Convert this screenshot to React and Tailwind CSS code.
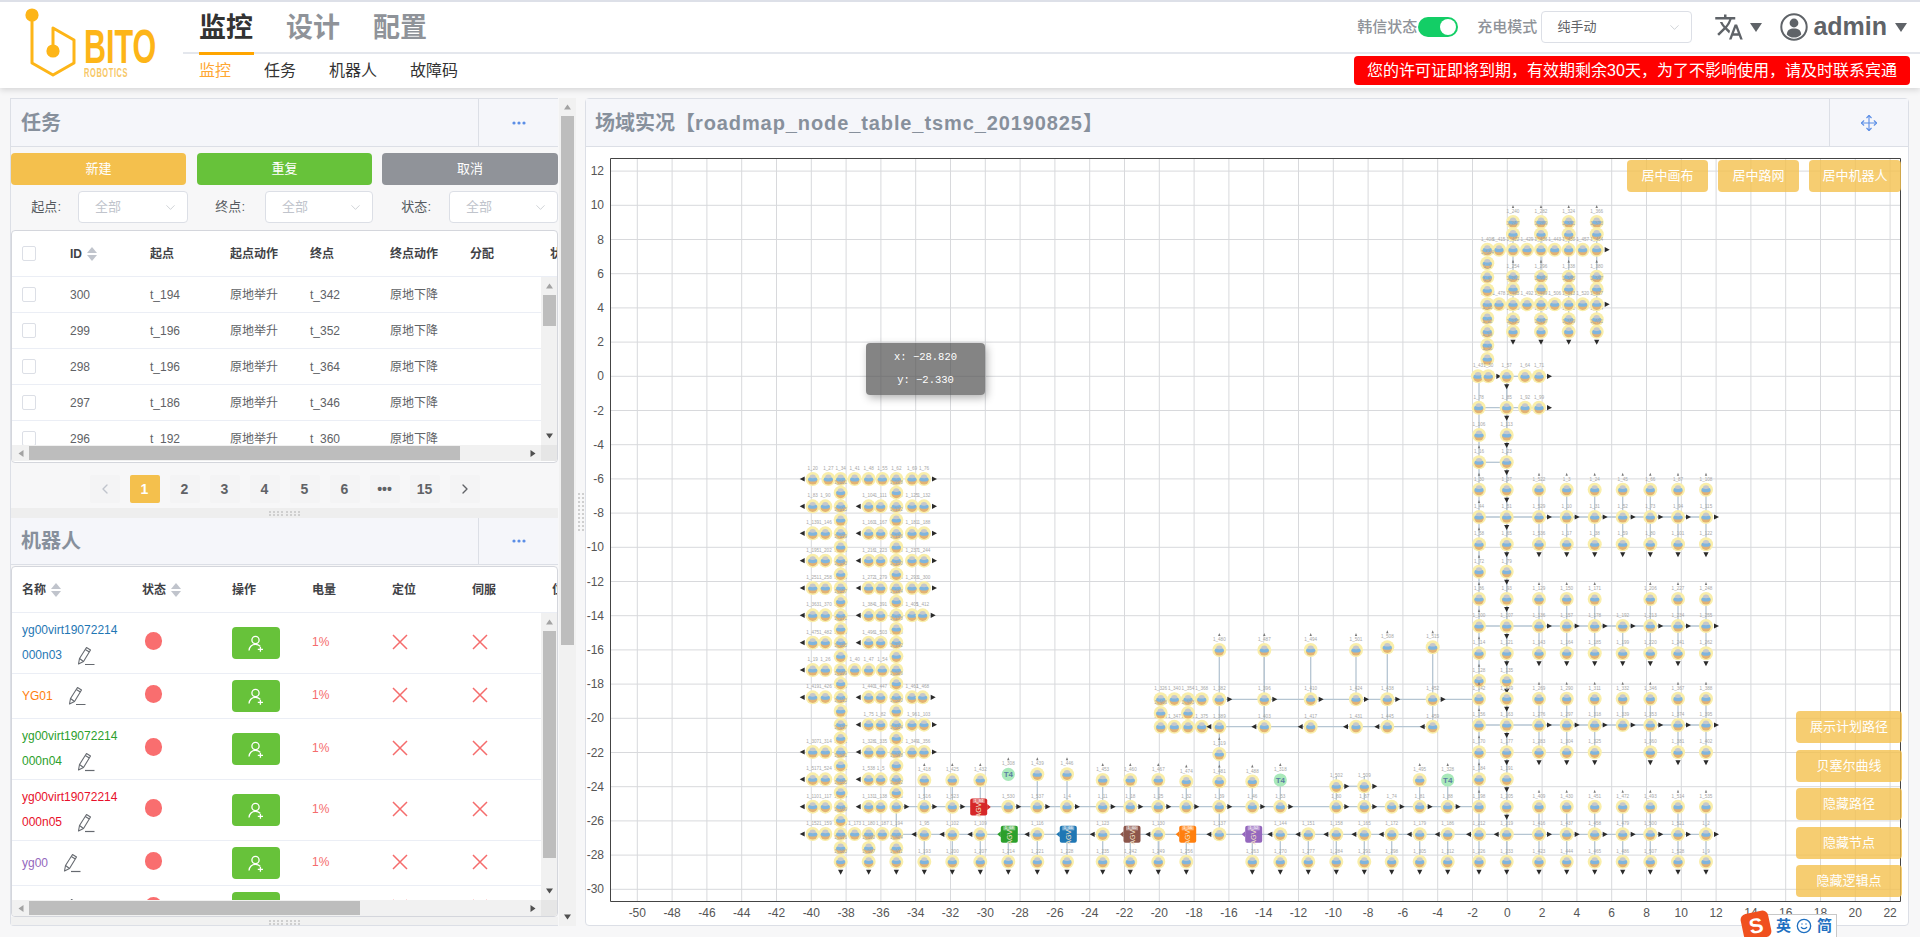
import React from "react";
import { ChevronDown, ChevronLeft, ChevronRight, Move, Smile } from "lucide-react";
import { MdTranslate } from "react-icons/md";

/* ---------- map data (page pixels; the svg's viewBox is aligned with the page) ---------- */
const nodes = [];
const add = (x, y, a) => nodes.push([x, y, a]);
const z9x = (z) => 790 + z / 3;
const z9y = (z) => 460 + z / 3;
const row9 = (yz, xs, l, r) =>
  xs.forEach((z, i) => add(z9x(z), z9y(yz), i === 0 && l ? "l" : i === xs.length - 1 && r ? "r" : ""));

row9(57, [68, 115, 152, 194, 236, 277, 319, 366, 402], true, true);
[139, 220, 302, 384, 876].forEach((y) => {
  row9(y, [68, 106, 152], true);
  row9(y, [236, 272, 319, 366, 402], true, true);
});
row9(466, [68, 106, 152], true);
row9(466, [236, 272, 319, 366, 398], true, true);
row9(712, [68, 106, 152], true);
row9(712, [236, 272, 319, 366, 398], true, true);
[548, 958].forEach((y) => {
  row9(y, [68, 106, 152], true);
  row9(y, [236, 272, 319], true);
});
row9(630, [68, 106, 152, 194, 236, 277, 319], true);
row9(794, [152]);
row9(794, [236, 272, 319, 366, 402], true, true);
row9(1040, [68, 106, 152], true);
row9(1040, [236, 272, 319], true, true);
row9(1122, [68, 106, 152, 194, 236, 277, 319], true);
[98, 180, 261, 343, 425, 507, 589, 671, 753, 835, 917, 998].forEach((y) => {
  row9(y, [152]);
  row9(y, [319]);
});
row9(1081, [152]);
[152, 236, 319].forEach((x) => {
  add(z9x(x), z9y(1164), "");
  add(z9x(x), z9y(1205), "d");
});

[[924.3, 780], [952.3, 780], [980.3, 780], [1037.3, 774.3], [1067, 774.3], [1102.7, 780], [1130.3, 780], [1158.3, 780], [1186.3, 781.5], [1219.3, 781.5], [1252.3, 781.5], [1419.7, 780]].forEach(([x, y]) => add(x, y, "u"));
[1336.3, 1364.3].forEach((x) => add(x, 786.3, "r"));
[924.3, 952.3, 1008.3, 1037.3, 1067, 1102.7, 1130.3, 1158.3, 1186.3, 1219.3, 1252.3, 1280.3, 1336.3, 1364.3, 1391.7, 1419.7, 1447.7].forEach((x) => add(x, 806.7, "r"));
[924.3, 952.3, 980.3, 1037.3, 1102.7, 1158.3, 1219.3, 1280.3, 1308.3, 1336.3, 1364.3, 1391.7, 1419.7, 1447.7].forEach((x) => add(x, 834.3, "l"));
[924.3, 952.3, 980.3, 1008.3, 1037.3, 1067, 1102.7, 1130.3, 1158.3, 1186.3, 1252.3, 1280.3, 1308.3, 1336.3, 1364.3, 1391.7, 1419.7, 1447.7].forEach((x) => add(x, 861.7, "d"));

add(1219.3, 754, "u");
[1160.7, 1174.3, 1188, 1201.7].forEach((x) => {
  add(x, 699.3, "");
  add(x, 726.7, "");
});
[1219.3, 1264.3, 1310.7, 1356, 1387.3, 1432.7].forEach((x) => {
  add(x, 699.3, "r");
  add(x, 726.7, "l");
});
add(1160.7, 713, "");
add(1188, 713, "");
[1219.3, 1264.3, 1310.7, 1356].forEach((x) => add(x, 650, "u"));
[1387.3, 1432.7].forEach((x) => add(x, 647.3, "u"));

const RC = [1539, 1566.7, 1594.7, 1622.7, 1650.3, 1678, 1706];
const GAP = 1622.7;
[
  [489.7, 517, 544.3, 0],
  [599, 626, 653.3, 1],
  [698.7, 725, 752.3, 2],
  [806.7, 834.3, 861.7, 0],
].forEach(([a, b, c, miss]) =>
  RC.forEach((x) => {
    if (!(miss === 1 && x === GAP)) add(x, a, "u");
    add(x, b, "r");
    if (!(miss === 2 && x === GAP)) add(x, c, "d");
  })
);
[462.3, 489.7, 517, 544.3, 571.7, 599, 626, 653.3, 680.7, 698.7, 725, 752.3, 779.3, 806.7].forEach((y) => {
  add(1479, y, "u");
  add(1506.7, y, "d");
});
add(1479, 834.3, "l");
add(1506.7, 834.3, "l");
add(1479, 861.7, "d");
add(1506.7, 861.7, "d");

[1513, 1541, 1568.7, 1596.7].forEach((x) => {
  add(x, 222, "u");
  add(x, 234.3, "");
  add(x, 276.7, "u");
  add(x, 289, "");
  add(x, 319.3, "");
  add(x, 331.7, "d");
});
[249.7, 304.3].forEach((y) =>
  [1487.3, 1499, 1513, 1527, 1541, 1554.7, 1568.7, 1582.7, 1596.7].forEach((x, i) => add(x, y, i === 8 ? "r" : ""))
);
[263.3, 277, 290.3, 318, 331.7, 345, 359].forEach((y) => add(1487.3, y, ""));
add(1478, 376.3, "");
add(1488.3, 376.3, "r");
add(1506.7, 376.3, "d");
add(1525, 376.3, "");
add(1539, 376.3, "r");
add(1478.7, 407.7, "");
add(1506.7, 407.7, "d");
add(1525, 407.7, "");
add(1539, 407.7, "r");
add(1479, 435, "");
add(1506.7, 435, "d");

const links = [
  [z9x(152), z9y(57), z9x(152), z9y(1205)],
  [z9x(319), z9y(57), z9x(319), z9y(1205)],
  [z9x(236), z9y(1122), z9x(236), z9y(1205)],
  [896.3, 806.7, 1479, 806.7],
  [896.3, 834.3, 1706, 834.3],
  [1219.3, 650, 1219.3, 834],
  [1219.3, 699.3, 1479, 699.3],
  [1219.3, 726.7, 1432.7, 726.7],
  [1264.3, 650, 1264.3, 726.7],
  [1310.7, 650, 1310.7, 699.3],
  [1356, 650, 1356, 699.3],
  [1387.3, 647, 1387.3, 726.7],
  [1432.7, 647, 1432.7, 726.7],
  [1336.3, 786.3, 1364.3, 786.3],
  [1479, 376.3, 1479, 861.7],
  [1506.7, 376.3, 1506.7, 861.7],
  [1479, 517, 1706, 517],
  [1479, 626, 1706, 626],
  [1479, 725, 1706, 725],
  [1479, 462.3, 1506.7, 462.3],
  [1478, 407.7, 1539, 407.7],
  [1506.7, 376.3, 1539, 376.3],
  ...RC.flatMap((x) => [
    [x, 489.7, x, 544.3],
    [x, x === GAP ? 626 : 599, x, 653.3],
    [x, 698.7, x, x === GAP ? 725 : 752.3],
    [x, 806.7, x, 861.7],
  ]),
  ...[924.3, 952.3, 980.3, 1037.3, 1067, 1102.7, 1130.3, 1158.3, 1186.3, 1252.3, 1280.3, 1336.3, 1364.3, 1419.7, 1447.7].map((x) => [x, 776, x, 806.7]),
  ...[924.3, 952.3, 980.3, 1008.3, 1037.3, 1067, 1102.7, 1130.3, 1158.3, 1186.3, 1252.3, 1280.3, 1308.3, 1336.3, 1364.3, 1391.7, 1419.7, 1447.7].map((x) => [x, 834.3, x, 861.7]),
];
[1513, 1541, 1568.7, 1596.7].forEach((x) => links.push([x, 222, x, 331.7]));

const agvs = [
  [978.7, 807, "#d62728", "r", "1_84"],
  [1009.3, 834.3, "#2ca02c", "l", "1_68"],
  [1068.3, 834.3, "#1f77b4", "l", "1_66"],
  [1132, 834.3, "#8c564b", "l", "1_60"],
  [1187.7, 834.3, "#ff7f0e", "l", "1_56"],
  [1253.7, 834.3, "#9467bd", "l", "1_52"],
];
const tNodes = [[1008.3, 774.3], [1280.3, 780], [1447.7, 780]];

const Node = ({ x, y, a, i }) => (
  <g transform={`translate(${x} ${y})`}>
    <use href="#mapnode" />
    <text y="-9" textAnchor="middle" fontSize="4.6" fill="#a6a6a6">{`1_${(i * 7 + 20) % 540}`}</text>
    {a === "r" && <path d="M8 -2.6L13 0L8 2.6Z" fill="#2a2a2a" />}
    {a === "l" && <path d="M-8 -2.6L-13 0L-8 2.6Z" fill="#2a2a2a" />}
    {a === "d" && <path d="M-2.6 8L2.6 8L0 13Z" fill="#2a2a2a" />}
    {a === "u" && <path d="M-1.2 -14L1.2 -14L0 -17Z" fill="#777" />}
  </g>
);

const MapChart = () => {
  const xs = [];
  for (let v = -50; v <= 22; v += 2) xs.push(v);
  const ys = [];
  for (let v = -30; v <= 12; v += 2) ys.push(v);
  const px = (v) => 1507.3 + v * 17.4;
  const py = (v) => 376.3 - v * 17.1;
  return (
    <svg viewBox="586 147 1322 778" width="1322" height="778" className="block">
      <defs>
        <g id="mapnode">
          <circle r="7" fill="#f9eeaa" />
          <path d="M-4.8 0.8A4.8 4.8 0 0 0 4.8 0.8Z" fill="#e3b273" />
          <ellipse cy="0.2" rx="4.6" ry="2.3" fill="#7fb5de" />
          <path d="M-3.2 -1.4A3.2 3 0 0 1 3.2 -1.4Q0 0 -3.2 -1.4Z" fill="#c6c8cc" />
        </g>
      </defs>
      {xs.map((v) => (
        <line key={v} x1={px(v)} x2={px(v)} y1="158" y2="901" stroke="#d8d9dc" />
      ))}
      {ys.map((v) => (
        <line key={v} x1="610" x2="1900" y1={py(v)} y2={py(v)} stroke="#d8d9dc" />
      ))}
      <path d="M610.5 158.5H1900.5V901.5H610.5Z" fill="none" stroke="#444" strokeWidth="1" />
      {xs.map((v) => (
        <text key={v} x={px(v)} y="917" textAnchor="middle" fontSize="12" fill="#555">{v}</text>
      ))}
      {ys.map((v) => (
        <text key={v} x="604" y={py(v) + 4} textAnchor="end" fontSize="12" fill="#555">{v}</text>
      ))}
      {links.map((l, i) => (
        <line key={i} x1={l[0]} y1={l[1]} x2={l[2]} y2={l[3]} stroke="#b5c5d2" strokeWidth="1.3" />
      ))}
      {nodes.map((n, i) => (
        <Node key={i} x={n[0]} y={n[1]} a={n[2]} i={i} />
      ))}
      {tNodes.map(([x, y], i) => (
        <g key={i} transform={`translate(${x} ${y})`}>
          <text y="-9" textAnchor="middle" fontSize="4.6" fill="#a6a6a6">1_3{i}8</text>
          <path d="M-1.2 -14L1.2 -14L0 -17Z" fill="#777" />
          <circle r="6.6" fill="#a9e9ba" />
          <text y="3" textAnchor="middle" fontSize="8" fontWeight="700" fill="#5d7fa3">T4</text>
        </g>
      ))}
      {agvs.map(([x, y, c, d, t], i) => (
        <g key={i} transform={`translate(${x} ${y})`}>
          <rect x="-8.5" y="-8.5" width="17" height="17" rx="2" fill={c} />
          {d === "r" ? <path d="M8.5 -3L12 0L8.5 3Z" fill={c} /> : <path d="M-8.5 -3L-12 0L-8.5 3Z" fill={c} />}
          <rect x="-6" y="-8" width="12" height="4" fill="#ffffff" opacity="0.4" />
          <text y="-5" textAnchor="middle" fontSize="4" fill="#fff">{t}</text>
          <text transform="rotate(-90) translate(-3 2.5)" textAnchor="middle" fontSize="7" fill="#f3e3c8">AGV</text>
        </g>
      ))}
    </svg>
  );
};

/* ---------- small drawings ---------- */
const Caret = ({ d, c = "#505050" }) => (
  <svg width="9" height="6" viewBox="0 0 9 6" className="block">
    {d === "u" && <path d="M1 5.5L8 5.5L4.5 .5Z" fill={c} />}
    {d === "d" && <path d="M1 .5L8 .5L4.5 5.5Z" fill={c} />}
  </svg>
);
const CaretH = ({ d, c = "#505050" }) => (
  <svg width="6" height="9" viewBox="0 0 6 9" className="block">
    {d === "l" ? <path d="M5.5 1L5.5 8L.5 4.5Z" fill={c} /> : <path d="M.5 1L.5 8L5.5 4.5Z" fill={c} />}
  </svg>
);
const Sort = () => (
  <svg width="10" height="14" viewBox="0 0 10 14" className="ml-[5px] shrink-0">
    <path d="M0 6L5 0L10 6Z" fill="#c0c4cc" />
    <path d="M0 8L5 14L10 8Z" fill="#c0c4cc" />
  </svg>
);
const Dots = () => (
  <svg width="14" height="4" viewBox="0 0 14 4">
    <circle cx="2" cy="2" r="1.6" fill="#5b8ee6" />
    <circle cx="7" cy="2" r="1.6" fill="#5b8ee6" />
    <circle cx="12" cy="2" r="1.6" fill="#5b8ee6" />
  </svg>
);
const EditIcon = () => (
  <svg width="18" height="20" viewBox="0 0 18 20" fill="none" stroke="#666a70" strokeWidth="1.1" className="shrink-0">
    <path d="M2.5 12.5L9.5 1.5L13.5 4L6.5 15.5L1.5 18Z" strokeLinejoin="round" />
    <path d="M8.3 3.5L12.3 6M2.5 12.5L6.5 15.5" />
    <path d="M8 18.5H17.5" strokeWidth="1.2" />
  </svg>
);
const UserPlusIcon = () => (
  <svg width="16" height="17" viewBox="0 0 16 17" fill="none" stroke="#fff" strokeWidth="1.3">
    <circle cx="7.5" cy="5" r="3.6" />
    <path d="M1 15.5C1.5 11.5 4 9.3 7.5 9.3C9.5 9.3 11 10 12.2 11.2" />
    <path d="M9.8 14.3H15M12.4 11.8V16.8" />
  </svg>
);
const Cross = () => (
  <svg width="16" height="16" viewBox="0 0 16 16" stroke="#f56c6c" strokeWidth="1.5">
    <path d="M1 1L15 15M15 1L1 15" />
  </svg>
);
const UserCircle = () => (
  <svg width="28" height="28" viewBox="0 0 28 28">
    <circle cx="14" cy="14" r="12.7" fill="none" stroke="#5f6368" strokeWidth="2" />
    <circle cx="14" cy="10" r="4.4" fill="#5f6368" />
    <path d="M6.8 21.5C7 17 10 15.5 14 15.5C18 15.5 21 17 21.2 21.5C19.5 23.6 17 24.6 14 24.6C11 24.6 8.5 23.6 6.8 21.5Z" fill="#5f6368" />
  </svg>
);
const TriDown = () => (
  <svg width="12" height="9" viewBox="0 0 12 9">
    <path d="M0 0H12L6 9Z" fill="#5f6368" />
  </svg>
);
const Logo = () => (
  <svg width="150" height="84" viewBox="20 2 150 84" className="block shrink-0">
    <g stroke="#fdb518" strokeWidth="3" fill="none" strokeLinejoin="round">
      <path d="M32 18V63L53 75L74 63V40L53 28V50" />
    </g>
    <circle cx="32" cy="15" r="6.6" fill="#fdb518" />
    <circle cx="53" cy="51" r="6.6" fill="#fdb518" />
    <text transform="translate(84 63) scale(0.636 1)" fontSize="48" fontWeight="700" fill="#fdb518">BITO</text>
    <text transform="translate(84 77) scale(0.62 1)" fontSize="12" fontWeight="700" fill="#f7c766" letterSpacing="1">ROBOTICS</text>
  </svg>
);

/* ---------- left panel parts ---------- */
const Select = ({ w }) => (
  <div className={`${w} h-[32px] bg-white border border-[#dcdfe6] rounded flex items-center justify-between pl-[16px] pr-[9px] text-[13px] text-[#c0c4cc]`}>
    <span>全部</span>
    <ChevronDown size={15} strokeWidth={1} color="#b4b8bf" />
  </div>
);
const Filter = ({ label, w, mr, cell }) => (
  <div className={`${cell} flex items-center justify-end`}>
    <span className={`${mr} text-[13px] text-[#555a60]`}>{label}:</span>
    <Select w={w} />
  </div>
);
const Check = () => <div className="w-[14px] h-[15px] bg-white border border-[#dcdfe6] rounded-[2px]" />;

const HScroll = ({ thumb }) => (
  <div className="h-[16px] shrink-0 bg-[#f1f1f1] flex items-center">
    <div className="w-[17px] flex justify-center"><CaretH d="l" c="#a3a3a3" /></div>
    <div className="flex-1 h-[14px]"><div className={`${thumb} h-full bg-[#bdbdbd]`} /></div>
    <div className="w-[17px] flex justify-center"><CaretH d="r" /></div>
    <div className="w-[16px] h-full bg-[#e6e6e6]" />
  </div>
);
const VScroll = ({ thumb }) => (
  <div className="w-[16px] shrink-0 bg-[#f1f1f1] flex flex-col items-center relative">
    <div className="h-[18px] flex items-center"><Caret d="u" c="#a3a3a3" /></div>
    <div className="flex-1 w-[13px]"><div className={`${thumb} bg-[#bdbdbd]`} /></div>
    <div className="h-[18px] flex items-center"><Caret d="d" /></div>
  </div>
);

const taskRows = [
  ["300", "t_194", "t_342"],
  ["299", "t_196", "t_352"],
  ["298", "t_196", "t_364"],
  ["297", "t_186", "t_346"],
  ["296", "t_192", "t_360"],
];
const TaskTable = () => (
  <div className="mt-[7px] h-[233px] bg-white border border-[#d4d6dc] rounded overflow-hidden flex flex-col text-[12px]">
    <div className="h-[46px] shrink-0 flex items-center border-b border-[#ebeef5] overflow-hidden whitespace-nowrap font-bold text-[#3f4246]">
      <div className="w-[58px] shrink-0 pl-[10px]"><Check /></div>
      <div className="w-[80px] shrink-0 flex items-center">ID<Sort /></div>
      <div className="w-[80px] shrink-0">起点</div>
      <div className="w-[80px] shrink-0">起点动作</div>
      <div className="w-[80px] shrink-0">终点</div>
      <div className="w-[80px] shrink-0">终点动作</div>
      <div className="w-[80px] shrink-0">分配</div>
      <div className="w-[80px] shrink-0">状态</div>
    </div>
    <div className="h-[168px] shrink-0 flex">
      <div className="flex-1 overflow-hidden text-[#606266]">
        {taskRows.map((r) => (
          <div key={r[0]} className="h-[36px] flex items-center border-b border-[#ebeef5] whitespace-nowrap">
            <div className="w-[58px] shrink-0 pl-[10px]"><Check /></div>
            <div className="w-[80px] shrink-0">{r[0]}</div>
            <div className="w-[80px] shrink-0">{r[1]}</div>
            <div className="w-[80px] shrink-0">原地举升</div>
            <div className="w-[80px] shrink-0">{r[2]}</div>
            <div className="w-[80px] shrink-0">原地下降</div>
          </div>
        ))}
      </div>
      <VScroll thumb="mt-0 h-[31px]" />
    </div>
    <HScroll thumb="w-[431px]" />
  </div>
);

const robots = [
  { n: ["yg00virt19072214", "000n03"], c: "text-[#1f77b4]", h: "h-[61px]" },
  { n: ["YG01"], c: "text-[#ff7f0e]", h: "h-[45px]" },
  { n: ["yg00virt19072214", "000n04"], c: "text-[#2ca02c]", h: "h-[61px]" },
  { n: ["yg00virt19072214", "000n05"], c: "text-[#e8102a]", h: "h-[61px]" },
  { n: ["yg00"], c: "text-[#9467bd]", h: "h-[45px]" },
  { n: [""], c: "text-[#8c564b]", h: "h-[45px]" },
];
const RobotTable = () => (
  <div className="h-[351px] mt-px bg-white border border-[#d4d6dc] rounded overflow-hidden flex flex-col text-[12px]">
    <div className="h-[46px] shrink-0 flex items-center border-b border-[#ebeef5] overflow-hidden whitespace-nowrap font-bold text-[#3f4246]">
      <div className="w-[130px] shrink-0 pl-[10px] flex items-center">名称<Sort /></div>
      <div className="w-[90px] shrink-0 flex items-center">状态<Sort /></div>
      <div className="w-[80px] shrink-0">操作</div>
      <div className="w-[80px] shrink-0">电量</div>
      <div className="w-[80px] shrink-0">定位</div>
      <div className="w-[80px] shrink-0">伺服</div>
      <div className="w-[80px] shrink-0">位置</div>
    </div>
    <div className="h-[287px] shrink-0 flex">
      <div className="flex-1 overflow-hidden">
        {robots.map((r, i) => (
          <div key={i} className={`${r.h} flex items-center border-b border-[#ebeef5] shrink-0`}>
            <div className={`w-[130px] shrink-0 pl-[10px] leading-[25px] ${r.c}`}>
              {r.n.length > 1 && <div className="whitespace-nowrap">{r.n[0]}</div>}
              <div className={`flex items-center gap-[15px] ${i === 5 ? "pl-[40px]" : ""}`}>
                {r.n[r.n.length - 1] && <span>{r.n[r.n.length - 1]}</span>}
                <EditIcon />
              </div>
            </div>
            <div className="w-[90px] shrink-0 pl-[3px]">
              <div className="w-[17px] h-[18px] mb-[4px] rounded-full bg-[#f96e6f]" />
            </div>
            <div className="w-[80px] shrink-0">
              <div className="w-[48px] h-[32px] rounded bg-[#67c23a] flex items-center justify-center"><UserPlusIcon /></div>
            </div>
            <div className="w-[80px] shrink-0 text-[#f56c6c] mb-[2px]">1%</div>
            <div className="w-[80px] shrink-0 mb-[3px]"><Cross /></div>
            <div className="w-[80px] shrink-0 mb-[3px]"><Cross /></div>
          </div>
        ))}
      </div>
      <VScroll thumb="h-[227px]" />
    </div>
    <HScroll thumb="w-[331px]" />
  </div>
);

const PanelTitle = ({ title, border }) => (
  <div className={`h-[47px] shrink-0 bg-[#f5f6fa] flex border-b border-[#dcdfe6] ${border}`}>
    <div className="flex-1 pl-[10px] flex items-center text-[20px] font-bold text-[#87909c]">{title}</div>
    <div className="w-[80px] border-l border-[#dcdfe6] flex items-center justify-center"><Dots /></div>
  </div>
);

const pages = ["<", "1", "2", "3", "4", "5", "6", "...", "15", ">"];
const Pagination = () => (
  <div className="mt-[12px] h-[28px] flex justify-center gap-[10px]">
    {pages.map((p) => (
      <div
        key={p}
        className={`w-[30px] h-[28px] rounded-[2px] flex items-center justify-center text-[14px] font-bold ${p === "1" ? "bg-[#f4c04d] text-white" : "bg-[#f4f4f5] text-[#606266]"}`}
      >
        {p === "<" ? <ChevronLeft size={16} color="#c0c4cc" /> : p === ">" ? <ChevronRight size={16} color="#606266" /> : p === "..." ? "•••" : p}
      </div>
    ))}
  </div>
);

const GripH = () => (
  <div className="grid grid-cols-8 gap-x-[2px] gap-y-px w-[31px]">
    {Array.from({ length: 16 }).map((_, i) => (
      <div key={i} className="w-[2px] h-[2px] bg-[#cfcfcf]" />
    ))}
  </div>
);
const GripV = () => (
  <div className="grid grid-cols-2 gap-[2px]">
    {Array.from({ length: 20 }).map((_, i) => (
      <div key={i} className="w-[2px] h-[2px] bg-[#cfcfcf]" />
    ))}
  </div>
);

const YBtn = ({ children, w }) => (
  <div className={`${w} h-[32px] rounded bg-[#f4c04d]/80 text-white text-[13px] flex items-center justify-center`}>{children}</div>
);

export default function App() {
  return (
    <div className="w-[1920px] h-[937px] overflow-hidden relative bg-[#f7f7f8] font-['Liberation_Sans','Noto_Sans_CJK_SC',sans-serif]">
      {/* header */}
      <header className="relative z-10 h-[88px] bg-white border-t-2 border-[#dde0e8] flex shadow-[0_2px_6px_rgba(0,0,0,0.14)]">
        <div className="w-[183px] shrink-0 pl-[20px]"><Logo /></div>
        <div className="flex-1 flex flex-col">
          <div className="h-[50px] flex items-center">
            <div className="pl-[16px] pt-[2px] flex gap-[33px] text-[27px] leading-none font-bold text-[#8f9399]">
              <span className="text-[#333333]">监控</span>
              <span>设计</span>
              <span>配置</span>
            </div>
            <div className="ml-auto pr-[13px] flex items-center">
              <span className="text-[15px] font-medium text-[#8f9399]">韩信状态</span>
              <div className="ml-[1px] w-[40px] h-[20px] rounded-full bg-[#13ce66] flex items-center justify-end pr-[2px]">
                <div className="w-[16px] h-[16px] rounded-full bg-white" />
              </div>
              <span className="ml-[19px] text-[15px] font-medium text-[#8f9399]">充电模式</span>
              <div className="ml-[4px] w-[151px] h-[32px] border border-[#dcdfe6] rounded flex items-center justify-between pl-[15px] pr-[9px] text-[13px] text-[#606266]">
                <span>纯手动</span>
                <ChevronDown size={15} strokeWidth={1} color="#b4b8bf" />
              </div>
              <MdTranslate size={30} color="#5f6368" className="ml-[22px]" />
              <span className="ml-[6px]"><TriDown /></span>
              <span className="ml-[18px]"><UserCircle /></span>
              <span className="ml-[5px] text-[25px] font-bold text-[#5f6368]">admin</span>
              <span className="ml-[8px]"><TriDown /></span>
            </div>
          </div>
          <div className="h-[2px] bg-[#e4e7ed]">
            <div className="ml-[16px] w-[55px] h-[3px] bg-[#ffa500]" />
          </div>
          <div className="flex-1 flex items-start pl-[16px]">
            <nav className="h-[34px] flex items-center gap-[33px] text-[16px] text-[#333333]">
              <span className="text-[#ffa733]">监控</span>
              <span>任务</span>
              <span>机器人</span>
              <span>故障码</span>
            </nav>
            <div className="ml-auto mr-[10px] mt-[2px] w-[556px] h-[29px] rounded bg-[#ff0000] text-white text-[16px] flex items-center justify-center whitespace-nowrap">
              您的许可证即将到期，有效期剩余30天，为了不影响使用，请及时联系宾通
            </div>
          </div>
        </div>
      </header>

      {/* body */}
      <main className="h-[838px] pt-[10px] pl-[10px] flex">
        {/* left column */}
        <div className="w-[548px] h-[828px] shrink-0 flex flex-col border-l border-b border-[#dcdfe6] rounded-bl">
          <PanelTitle title="任务" border="border-t h-[49px]" />
          <div className="mt-[6px] flex">
            <div className="w-[175px] h-[32px] rounded bg-[#f4c04d] text-white text-[13px] flex items-center justify-center">新建</div>
            <div className="ml-[11px] w-[175px] h-[32px] rounded bg-[#67c23a] text-white text-[13px] flex items-center justify-center">重复</div>
            <div className="ml-[10px] w-[176px] h-[32px] rounded bg-[#909399] text-white text-[13px] flex items-center justify-center">取消</div>
          </div>
          <div className="mt-[6px] flex">
            <Filter label="起点" w="w-[110px]" mr="mr-[17px]" cell="w-[177px]" />
            <Filter label="终点" w="w-[108px]" mr="mr-[20px]" cell="w-[185px]" />
            <Filter label="状态" w="w-[109px]" mr="mr-[18px]" cell="w-[185px]" />
          </div>
          <TaskTable />
          <Pagination />
          <div className="mt-[5px] h-[10px] shrink-0 bg-[#eeeeee] flex items-center justify-center"><GripH /></div>
          <PanelTitle title="机器人" border="" />
          <RobotTable />
          <div className="flex-1 bg-[#f1f1f1] flex items-end justify-center"><GripH /></div>
        </div>

        {/* outer scrollbar */}
        <div className="w-[17px] ml-px h-[828px] shrink-0 bg-[#f1f1f1] flex flex-col items-center">
          <div className="h-[18px] flex items-center"><Caret d="u" c="#a3a3a3" /></div>
          <div className="flex-1 w-[13px]"><div className="h-[529px] bg-[#bdbdbd]" /></div>
          <div className="h-[18px] flex items-center"><Caret d="d" /></div>
        </div>

        {/* splitter */}
        <div className="w-[9px] h-[828px] shrink-0 flex items-center justify-center"><GripV /></div>

        {/* map panel */}
        <section className="w-[1324px] h-[828px] shrink-0 border border-[#dcdfe6] rounded flex flex-col bg-white">
          <div className="h-[48px] shrink-0 bg-[#f5f6fa] flex border-b border-[#dcdfe6]">
            <div className="flex-1 pl-[9px] flex items-center text-[20px] font-bold text-[#87909c]">
              场域实况【<span className="tracking-[0.9px]">roadmap_node_table_tsmc_20190825</span>】
            </div>
            <div className="w-[79px] border-l border-[#dcdfe6] flex items-center justify-center"><Move size={18} strokeWidth={1.5} color="#5b8ee6" /></div>
          </div>
          <div className="relative flex-1 overflow-hidden">
            <MapChart />
            <div className="absolute top-[13px] right-[7px] flex gap-[10px]">
              <YBtn w="w-[81px]">居中画布</YBtn>
              <YBtn w="w-[81px]">居中路网</YBtn>
              <YBtn w="w-[92px]">居中机器人</YBtn>
            </div>
            <div className="absolute top-[564px] right-[6px] flex flex-col gap-[6.5px]">
              <YBtn w="w-[106px]">展示计划路径</YBtn>
              <YBtn w="w-[106px]">贝塞尔曲线</YBtn>
              <YBtn w="w-[106px]">隐藏路径</YBtn>
              <YBtn w="w-[106px]">隐藏节点</YBtn>
              <YBtn w="w-[106px]">隐藏逻辑点</YBtn>
            </div>
            <div className="absolute left-[280px] top-[196px] w-[119px] h-[52px] rounded bg-[#505050]/70 shadow-[2px_3px_8px_rgba(0,0,0,0.3)] flex flex-col items-center justify-center gap-[7px] text-white text-[10.5px] font-['Liberation_Mono',monospace]">
              <div>x: −28.820</div>
              <div>y: −2.330</div>
            </div>
          </div>
        </section>
      </main>

      {/* input-method bar */}
      <div className="absolute left-[1752px] bottom-0 w-[85px] h-[23px] bg-white border border-b-0 border-[#c8c8c8] flex items-center justify-end pr-[4px] gap-[5px] text-[15px] font-bold text-[#1f70c1]">
        <span>英</span>
        <Smile size={16} strokeWidth={2} color="#1f70c1" />
        <span>简</span>
      </div>
      <div className="absolute left-[1742px] bottom-[-2px] w-[28px] h-[27px] rounded-[6px] -rotate-12 bg-[#f0501e] text-white text-[21px] font-bold flex items-center justify-center">S</div>
    </div>
  );
}
